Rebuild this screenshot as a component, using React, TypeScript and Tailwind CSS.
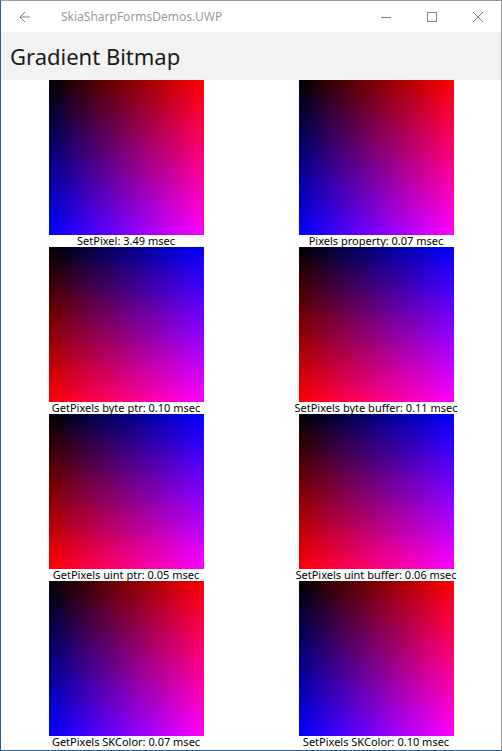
import React from 'react';

type Cell = { label: string; swapped: boolean };

const cells: Cell[] = [
  { label: 'SetPixel: 3.49 msec', swapped: false },
  { label: 'Pixels property: 0.07 msec', swapped: false },
  { label: 'GetPixels byte ptr: 0.10 msec', swapped: true },
  { label: 'SetPixels byte buffer: 0.11 msec', swapped: true },
  { label: 'GetPixels uint ptr: 0.05 msec', swapped: true },
  { label: 'SetPixels uint buffer: 0.06 msec', swapped: true },
  { label: 'GetPixels SKColor: 0.07 msec', swapped: false },
  { label: 'SetPixels SKColor: 0.10 msec', swapped: false },
];

const GradientTile: React.FC<{ swapped: boolean }> = ({ swapped }) => {
  // red runs across, blue runs down (or the other way round when bytes are swapped)
  const cls = swapped
    ? 'bg-[image:linear-gradient(to_bottom,#000,#f00),linear-gradient(to_right,#000,#00f)]'
    : 'bg-[image:linear-gradient(to_right,#000,#f00),linear-gradient(to_bottom,#000,#00f)]';
  return <div className={`h-[155px] w-[155px] bg-blend-screen ${cls}`} />;
};

const App: React.FC = () => {
  return (
    <div className="w-[502px] h-[751px] flex flex-col bg-white border border-[#9a9a9a] border-l-[#2d5f8f] border-b-[#2d5f8f] font-['Noto_Sans',sans-serif] overflow-hidden">
      {/* Title bar */}
      <div className="h-[31px] flex items-center bg-white text-[#999]">
        <div className="w-[48px] flex justify-center">
          <svg width="12" height="12" viewBox="0 0 12 12" fill="none" stroke="#808080" strokeWidth="1">
            <path d="M11 6H1M6 1L1 6l5 5" />
          </svg>
        </div>
        <span className="ml-[12px] text-[12px] text-[#9a9a9a]">SkiaSharpFormsDemos.UWP</span>
        <div className="ml-auto flex h-full">
          <div className="w-[46px] flex items-center justify-center">
            <svg width="10" height="10" viewBox="0 0 10 10" stroke="#808080" strokeWidth="1">
              <path d="M0 5.5h10" />
            </svg>
          </div>
          <div className="w-[46px] flex items-center justify-center">
            <svg width="10" height="10" viewBox="0 0 10 10" fill="none" stroke="#808080" strokeWidth="1">
              <rect x="0.5" y="0.5" width="9" height="9" />
            </svg>
          </div>
          <div className="w-[46px] flex items-center justify-center">
            <svg width="10" height="10" viewBox="0 0 10 10" stroke="#808080" strokeWidth="1">
              <path d="M0 0l10 10M10 0L0 10" />
            </svg>
          </div>
        </div>
      </div>

      {/* Page header */}
      <div className="h-[48px] bg-[#f2f2f2] flex items-center px-[9px]">
        <h1 className="text-[22px] text-[#1a1a1a] font-normal">Gradient Bitmap</h1>
      </div>

      {/* Bitmaps */}
      <div className="grid grid-cols-2">
        {cells.map((c) => (
          <div key={c.label} className="flex flex-col items-center">
            <GradientTile swapped={c.swapped} />
            <span className="text-[11px] leading-[12px] text-black">{c.label}</span>
          </div>
        ))}
      </div>
    </div>
  );
};

export default App;
